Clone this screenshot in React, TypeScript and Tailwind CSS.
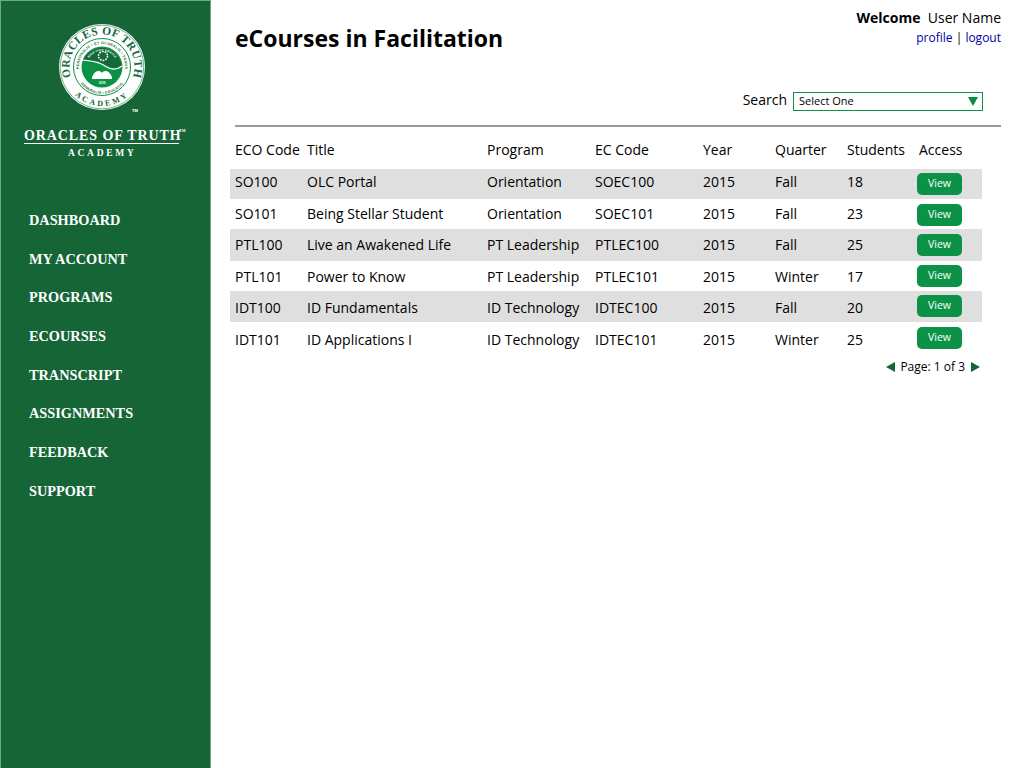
const NAV = ['DASHBOARD', 'MY ACCOUNT', 'PROGRAMS', 'ECOURSES', 'TRANSCRIPT', 'ASSIGNMENTS', 'FEEDBACK', 'SUPPORT']

// the rows in the mockup are not evenly spaced, so each one carries its own offsets
const ROWS = [
  { cells: ['SO100', 'OLC Portal', 'Orientation', 'SOEC100', '2015', 'Fall', '18'], row: 'h-[30px] bg-[#dfdfdf]', text: 'pt-[3px]', btn: 'mt-[4px]' },
  { cells: ['SO101', 'Being Stellar Student', 'Orientation', 'SOEC101', '2015', 'Fall', '23'], row: 'h-[30px]', text: 'pt-[5px]', btn: 'mt-[5px]' },
  { cells: ['PTL100', 'Live an Awakened Life', 'PT Leadership', 'PTLEC100', '2015', 'Fall', '25'], row: 'h-[32px] bg-[#dfdfdf]', text: 'pt-[6px]', btn: 'mt-[5px]' },
  { cells: ['PTL101', 'Power to Know', 'PT Leadership', 'PTLEC101', '2015', 'Winter', '17'], row: 'h-[30px]', text: 'pt-[6px]', btn: 'mt-[4px]' },
  { cells: ['IDT100', 'ID Fundamentals', 'ID Technology', 'IDTEC100', '2015', 'Fall', '20'], row: 'h-[31px] bg-[#dfdfdf]', text: 'pt-[7px]', btn: 'mt-[4px]' },
  { cells: ['IDT101', 'ID Applications I', 'ID Technology', 'IDTEC101', '2015', 'Winter', '25'], row: 'h-[31px]', text: 'pt-[8px]', btn: 'mt-[5px]' },
]

const HEADERS = ['ECO Code', 'Title', 'Program', 'EC Code', 'Year', 'Quarter', 'Students']

const COLUMNS = 'grid grid-cols-[72px_180px_108px_108px_72px_72px_70px_65px] pl-[5px]'

function Seal() {
  return (
    <svg width="88" height="88" viewBox="0 0 88 88" className="block">
      <defs>
        <path id="seal-top" d="M 19.1 64.9 A 32.5 32.5 0 1 1 68.9 64.9" />
        <path id="seal-bottom" d="M 5 44 A 39 39 0 0 0 83 44" />
        <path id="seal-inner" d="M 26.4 58.8 A 23 23 0 1 1 61.6 58.8" />
        <path id="seal-inner-bottom" d="M 17 44 A 27 27 0 0 0 71 44" />
        <path id="seal-motto" d="M 29.5 38 A 15.5 15.5 0 0 1 58.5 38" />
      </defs>
      <circle cx="44" cy="44" r="43" fill="#ffffff" />
      <circle cx="44" cy="44" r="41.8" fill="none" stroke="#0f7a40" strokeWidth="0.6" />
      <circle cx="44" cy="44" r="28.5" fill="#ffffff" stroke="#0b9247" strokeWidth="1" />
      <text fontFamily="'Liberation Serif', serif" fontSize="11.5" fontWeight="700" fill="#14693a" letterSpacing="0.3">
        <textPath href="#seal-top" startOffset="50%" textAnchor="middle">ORACLES OF TRUTH</textPath>
      </text>
      <text fontFamily="'Liberation Serif', serif" fontSize="8" fontWeight="700" fill="#14693a" letterSpacing="2.6">
        <textPath href="#seal-bottom" startOffset="50%" textAnchor="middle">ACADEMY</textPath>
      </text>
      <text fontFamily="'Liberation Sans', sans-serif" fontSize="3.6" fontWeight="700" fill="#14693a" letterSpacing="0.3">
        <textPath href="#seal-inner" startOffset="50%" textAnchor="middle">PERSONALIS • ET GLOBALIS • TRANS</textPath>
      </text>
      <text fontFamily="'Liberation Sans', sans-serif" fontSize="3.6" fontWeight="700" fill="#14693a" letterSpacing="0.3">
        <textPath href="#seal-inner-bottom" startOffset="50%" textAnchor="middle">GENERALIS • EDUCATIO</textPath>
      </text>
      <circle cx="44" cy="44" r="20.5" fill="#0b9247" />
      <path d="M 25 37 C 28 30 36 25 44 25 C 54 25 62 33 64 43 C 58 46 52 45 47 42 C 40 38 32 38 25 37 Z" fill="#14693a" />
      <path d="M 24 37 C 32 38 40 38 47 43 C 53 47 59 47 64 43" fill="none" stroke="#ffffff" strokeWidth="1.2" />
      <circle cx="45" cy="33" r="4.5" fill="none" stroke="#ffffff" strokeWidth="1.5" strokeDasharray="1.7 1.1" />
      <path d="M 34 54 C 37 47 42 47 44 50 C 46 47 51 47 54 54 L 54 56 L 34 56 Z" fill="#ffffff" />
      <text fontFamily="'Liberation Sans', sans-serif" fontSize="3" fontWeight="700" fill="#ffffff" letterSpacing="0.15">
        <textPath href="#seal-motto" startOffset="50%" textAnchor="middle">BIOS VIVIT GRACIA</textPath>
      </text>
      <text x="44" y="61" textAnchor="middle" fontFamily="'Liberation Sans', sans-serif" fontSize="3" fontWeight="700" fill="#ffffff">2009</text>
    </svg>
  )
}

function Logo() {
  return (
    <div className="flex flex-col items-start pt-[22px] pl-[23px] text-white">
      <div className="relative ml-[34px]">
        <Seal />
        <span className="absolute left-[74px] bottom-[-2px] text-[4px] font-bold leading-none">TM</span>
      </div>
      <div className="relative mt-[17px] w-[155px] border-b border-white text-center font-['Liberation_Serif',serif] text-[14px] font-bold leading-[15px] tracking-[0.9px] whitespace-nowrap">
        ORACLES OF TRUTH
        <span className="absolute left-[155px] top-[1px] text-[4px] leading-none tracking-normal">TM</span>
      </div>
      <div className="mt-[3px] ml-[44px] font-['Liberation_Serif',serif] text-[9.5px] font-bold leading-[12px] tracking-[2.7px]">
        ACADEMY
      </div>
    </div>
  )
}

function Sidebar() {
  return (
    <aside className="h-screen w-[211px] shrink-0 border-x border-t border-[#6fa78a] bg-[#156537]">
      <Logo />
      <nav className="mt-[51px] flex flex-col gap-[17.7px] pl-[28px]">
        {NAV.map((item) => (
          <a key={item} className="font-['Liberation_Serif',serif] text-[14.3px] font-bold leading-[21px] text-white whitespace-nowrap">
            {item}
          </a>
        ))}
      </nav>
    </aside>
  )
}

function CourseTable() {
  return (
    <div className="w-[771px] text-[14px] text-black">
      <div className={`${COLUMNS} h-[42px] items-center pt-[3px]`}>
        {HEADERS.map((h) => (
          <div key={h} className="whitespace-nowrap">{h}</div>
        ))}
        <div className="pl-[2px]">Access</div>
      </div>
      {ROWS.map((r) => (
        <div key={r.cells[0]} className={`${COLUMNS} w-[752px] items-start ${r.row}`}>
          {r.cells.map((cell, j) => (
            <div key={j} className={`whitespace-nowrap leading-[20px] ${r.text}`}>{cell}</div>
          ))}
          <button className={`h-[22px] w-[45px] rounded-[5px] bg-[#0b9247] pb-[2px] text-[10.5px] leading-[20px] text-white ${r.btn}`}>View</button>
        </div>
      ))}
      <div className="mt-[6px] flex w-[752px] items-center justify-end pr-[2px] text-[12px] leading-[16px]">
        <svg width="9" height="10" viewBox="0 0 9 10" className="mr-[5px]"><path d="M0 5 L9 0 V10 Z" fill="#156537" /></svg>
        <span>Page: 1 of 3</span>
        <svg width="9" height="10" viewBox="0 0 9 10" className="ml-[6px]"><path d="M9 5 L0 0 V10 Z" fill="#156537" /></svg>
      </div>
    </div>
  )
}

export default function App() {
  return (
    <main className="flex h-screen overflow-hidden bg-white font-['Open_Sans',sans-serif]">
      <Sidebar />
      <div className="flex-1 pl-[19px]">
        <div className="flex items-start justify-between pr-[23px] pl-[5px]">
          <h1 className="mt-[22px] text-[23px] font-bold leading-[32px] text-black">eCourses in Facilitation</h1>
          <div className="mt-[8px] text-right">
            <div className="text-[14px] leading-[20px] text-black">
              <span className="font-bold">Welcome</span>&nbsp; User Name
            </div>
            <div className="mt-[1px] text-[12px] leading-[18px] text-black">
              <a className="text-[#0000a0]">profile</a> | <a className="text-[#0000a0]">logout</a>
            </div>
          </div>
        </div>
        <div className="mt-[36px] flex items-start justify-end gap-[6px] pr-[41px]">
          <span className="text-[14px] leading-[20px] text-black">Search</span>
          <div className="mt-[2px] flex h-[19px] w-[190px] items-center justify-between border border-[#0b9247] pl-[5px] pr-[4px] text-[11px] text-black">
            <span>Select One</span>
            <svg width="10" height="9" viewBox="0 0 10 9"><path d="M0 0 H10 L5 9 Z" fill="#0b8a45" /></svg>
          </div>
        </div>
        <div className="ml-[5px] mt-[14px] w-[766px] border-t-2 border-[#9a9a9a]" />
        <CourseTable />
      </div>
    </main>
  )
}
